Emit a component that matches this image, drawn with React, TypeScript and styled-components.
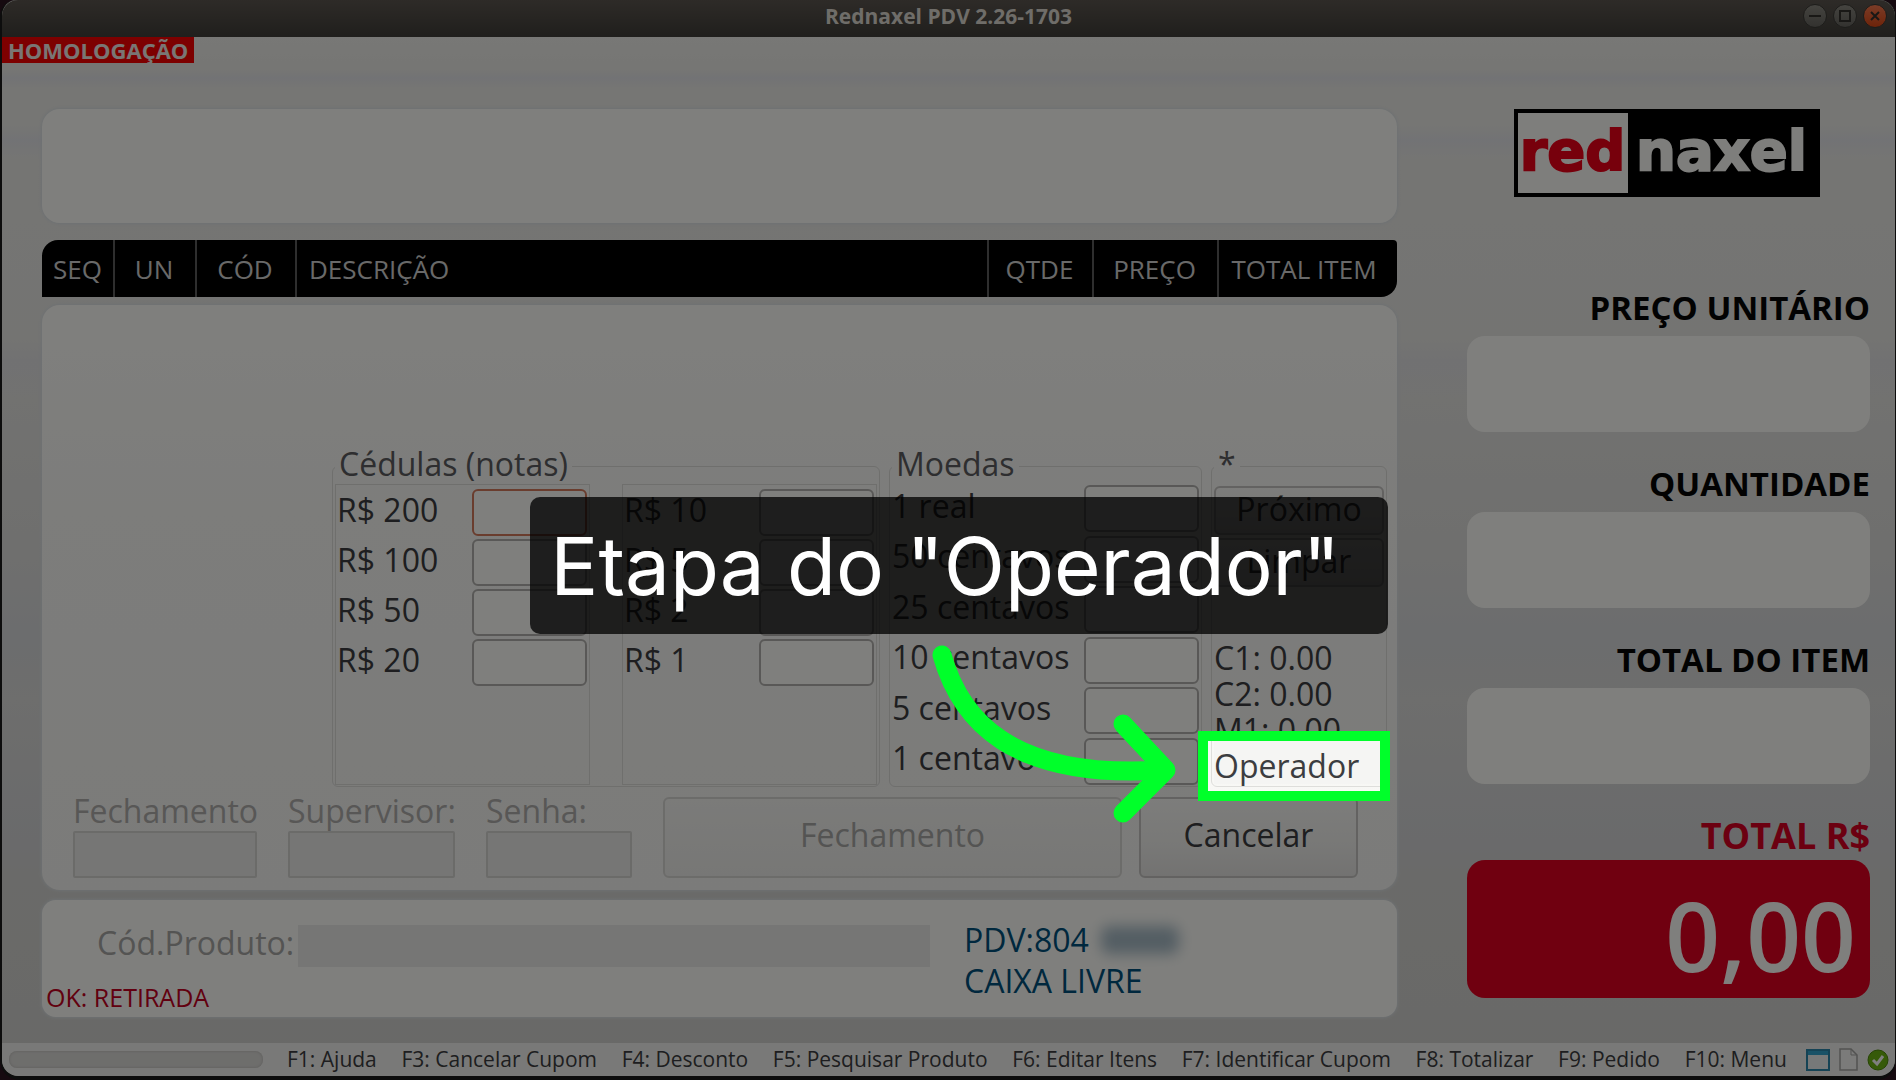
import React from "react";
import styled, { createGlobalStyle } from "styled-components";

const GlobalStyle = createGlobalStyle`
  * { box-sizing: border-box; }
  body { margin: 0; background: #2c1420; font-family: "Open Sans", "Noto Sans", sans-serif; color: #3c3d40; }
  button, input, output { font: inherit; color: inherit; }
`;

const Window = styled.div`
  display: flex;
  flex-direction: column;
  min-height: 100vh;
  border: solid #1a1a1a;
  border-width: 0 1px 4px 2px;
  border-radius: 16px 16px 20px 20px;
  background: linear-gradient(180deg, #f0f0ec 37px, #ecece8 70px, #e5e6ea 78px, #ecece8 88px, #ecece8 126px,
    #e5e6ea 140px, #ebebe7 160px, #e8e8e5 340px, #e3e3e5 360px, #e4e4e1 400px, #dededc 560px, #d8dadc 640px,
    #dcdcda 700px, #d4d5d7 840px, #d5d5d2 880px, #d2d2cf 100%);
`;

const TitleBar = styled.header`
  display: grid;
  grid-template-columns: 1fr auto 1fr;
  align-items: center;
  height: 37px;
  padding: 0 8px 6px;
  border-radius: 16px 16px 0 0;
  background: linear-gradient(180deg, #5c5650, #403e39);
`;

const Title = styled.h1`
  grid-column: 2;
  margin: 0;
  font-size: 21px;
  line-height: 28px;
  font-weight: 700;
  color: #dfdbd2;
`;

const WindowButtons = styled.div`
  display: flex;
  justify-content: flex-end;
  gap: 6px;
`;

const WindowButton = styled.button<{ $close?: boolean }>`
  display: grid;
  place-items: center;
  width: 24px;
  height: 24px;
  padding: 0;
  border: 1px solid #3a3935;
  border-radius: 50%;
  background: ${(p) => (p.$close ? "linear-gradient(#f5784f, #dd4814)" : "linear-gradient(#8a8880, #66645f)")};
  color: #33302c;
`;

const Badge = styled.strong`
  align-self: flex-start;
  padding: 0 6px;
  background: #fb0000;
  color: #f3ece8;
  font-size: 22px;
  line-height: 26px;
`;

const Workspace = styled.main`
  flex: 1;
  display: grid;
  grid-template-columns: minmax(0, 1fr) 403px;
  gap: 70px;
  padding: 46px 25px 26px 40px;
`;

const Sale = styled.div`
  display: flex;
  flex-direction: column;
`;

const Card = styled.section`
  border-radius: 18px;
  background: #fffffb;
  box-shadow: 0 0 3px 1px #dce2e6;
`;

const Display = styled(Card)`
  height: 114px;
  margin-bottom: 17px;
`;

const Items = styled.table`
  width: 100%;
  height: 57px;
  margin-bottom: 8px;
  table-layout: fixed;
  border-collapse: separate;
  border-spacing: 0;
  border-radius: 16px 4px 16px 0;
  background: #000;
`;

const Column = styled.th<{ $width?: number }>`
  width: ${(p) => (p.$width ? `${p.$width}px` : "auto")};
  padding: ${(p) => (p.$width ? "0 2px 0 0" : "0 12px")};
  text-align: ${(p) => (p.$width ? "center" : "left")};
  border-left: 2px solid #5c5c5c;
  color: #d2d2d2;
  font-size: 26px;
  line-height: 32px;
  font-weight: 400;
  &:first-child { border-left: 0; padding: 0; }
  &:last-child { padding-right: 8px; }
`;

const Closing = styled(Card)`
  flex: 1;
  display: flex;
  flex-direction: column;
  justify-content: flex-end;
  gap: 10px;
  padding: 0 10px 12px 31px;
  margin-bottom: 10px;
  background: linear-gradient(#fffffb, #fafaf7 35%, #f7f7f4);
  font-size: 32px;
  line-height: 36px;
`;

const Groups = styled.div`
  display: flex;
  justify-content: flex-end;
  gap: 9px;
`;

const Group = styled.fieldset<{ $width: number }>`
  display: flex;
  width: ${(p) => p.$width}px;
  min-width: 0;
  margin: 0;
  padding: 0 2px 1px;
  border: 1px solid #dededb;
  border-radius: 6px;
`;

const Legend = styled.legend`
  padding: 0 4px 4px;
  line-height: 32px;
  color: #5c5d60;
`;

const Notes = styled.div`
  flex: 1;
  display: flex;
  justify-content: space-between;
  height: 301px;
`;

const NotesColumn = styled.div`
  display: flex;
  flex-direction: column;
  gap: 3px;
  width: 255px;
  padding: 4px 2px 4px 1px;
  border: 1px solid #dededb;
`;

const Coins = styled.div`
  flex: 1;
  display: flex;
  flex-direction: column;
  justify-content: space-between;
  padding-top: 1px;
`;

const Row = styled.div`
  display: flex;
  justify-content: space-between;
  align-items: center;
`;

const RowLabel = styled.label`
  padding-bottom: 6px;
  white-space: nowrap;
`;

const Amount = styled.input`
  width: 115px;
  height: 47px;
  border: 2px solid #b2b1ae;
  border-radius: 6px;
  background: #fffffb;
  &[data-current="true"] { border-color: #d47a5c; }
`;

const Summary = styled.div`
  flex: 1;
  display: flex;
  flex-direction: column;
  gap: 3px;
  padding: 2px 0 1px;
`;

const Button = styled.button<{ $tall?: boolean }>`
  height: ${(p) => (p.$tall ? 81 : 49)}px;
  padding: 0 0 ${(p) => (p.$tall ? 6 : 4)}px;
  border: 2px solid #c6c5c2;
  border-radius: 6px;
  background: linear-gradient(#fafaf7, #f1f1ee 60%, #e6e5e3);
  &:disabled { color: #a9a8a6; border-color: #d9d8d5; background: linear-gradient(#f6f6f3, #efefec); }
`;

const Totals = styled.ul`
  margin: auto 0 0;
  padding: 0;
  list-style: none;
  line-height: 36px;
`;

const Operator = styled.li`
  position: relative;
  margin-top: -7px;
  padding-top: 7px;
  background: #f5f5f3;
`;

const Spotlight = styled.div`
  position: absolute;
  z-index: 10;
  inset: -10px -6px -17px -16px;
  border: 10px solid #00ff2a;
  box-shadow: 0 0 0 4000px rgba(0, 0, 0, 0.5);
`;

const Tip = styled.div`
  position: absolute;
  z-index: 11;
  right: -4px;
  bottom: 150px;
  padding: 0 48px 0 20px;
  border-radius: 10px;
  background: rgba(0, 0, 0, 0.76);
  color: #fff;
  font-family: Inter, "Liberation Sans", sans-serif;
  font-size: 80px;
  line-height: 137px;
  white-space: nowrap;
`;

const Arrow = styled.svg`
  position: absolute;
  z-index: 12;
  right: 207px;
  bottom: -39px;
`;

const Access = styled.div`
  display: grid;
  grid-template-columns: 184px 167px 146px minmax(0, 1fr) 219px;
  column-gap: 31px;
  padding-right: 29px;
`;

const AccessField = styled.label`
  display: flex;
  flex-direction: column;
  justify-content: space-between;
  line-height: 28px;
  white-space: nowrap;
  color: #b0afad;
`;

const AccessInput = styled.input`
  width: 100%;
  height: 47px;
  border: 2px solid #d6d6d3;
  border-radius: 2px;
  background: #ededea;
`;

const CloseActions = styled.div`
  grid-column: 4 / 6;
  display: grid;
  grid-template-columns: minmax(0, 1fr) 219px;
  gap: 17px;
`;

const Entry = styled(Card)`
  display: grid;
  grid-template-columns: minmax(0, 1fr) 433px;
  height: 117px;
  border-radius: 14px;
`;

const EntryLeft = styled.div`
  display: flex;
  flex-direction: column;
  justify-content: space-between;
  padding: 25px 34px 2px 4px;
`;

const Product = styled.label`
  display: flex;
  gap: 4px;
  padding-left: 51px;
  font-size: 32px;
  line-height: 36px;
  color: #a9a8a6;
`;

const ProductInput = styled.input`
  flex: 1;
  min-width: 0;
  height: 42px;
  border: 0;
  background: #ededea;
`;

const Message = styled.output`
  font-size: 25px;
  line-height: 36px;
  color: #c40020;
`;

const Station = styled.div`
  padding-top: 19px;
  font-size: 32px;
  line-height: 41px;
  color: #00507c;
`;

const StationLine = styled.div`
  display: flex;
  align-items: center;
  gap: 12px;
`;

const Redacted = styled.span`
  width: 78px;
  height: 28px;
  border-radius: 8px;
  background: #a8bcc7;
  filter: blur(7px);
`;

const Side = styled.aside`
  display: flex;
  flex-direction: column;
  gap: 32px;
`;

const Logo = styled.div`
  align-self: center;
  display: flex;
  width: 306px;
  height: 88px;
  margin: 0 4px 59px 0;
  border: 4px solid #000;
  background: #000;
  color: #fdfdf9;
  font-family: "DejaVu Sans", sans-serif;
  font-size: 56px;
  line-height: 76px;
  font-weight: 700;
  -webkit-text-stroke: 2px currentColor;
`;

const LogoRed = styled.span`
  display: flex;
  justify-content: center;
  width: 110px;
  background: #fdfdf9;
  color: #ef0018;
`;

const LogoRest = styled.span`
  flex: 1;
  text-align: center;
`;

const SideField = styled.label<{ $total?: boolean }>`
  display: flex;
  flex-direction: column;
  gap: ${(p) => (p.$total ? 4 : 8)}px;
  text-align: right;
  font-size: ${(p) => (p.$total ? 36 : 33)}px;
  line-height: 40px;
  font-weight: 700;
  color: ${(p) => (p.$total ? "#d80022" : "#050505")};
`;

const SideInput = styled.input<{ $total?: boolean }>`
  width: 100%;
  height: ${(p) => (p.$total ? 138 : 96)}px;
  padding: ${(p) => (p.$total ? "10px 14px 0" : "0 16px")};
  border: 0;
  border-radius: 18px;
  background: ${(p) => (p.$total ? "#e00020" : "#fffffb")};
  color: ${(p) => (p.$total ? "#fffffb" : "#222")};
  font-size: ${(p) => (p.$total ? 96 : 48)}px;
  font-weight: 600;
  text-align: right;
`;

const StatusBar = styled.footer`
  display: flex;
  align-items: center;
  height: 33px;
  padding: 0 6px 0 7px;
  border-radius: 0 0 16px 16px;
  background: #f3f3f0;
  font-size: 21px;
  line-height: 28px;
  white-space: nowrap;
`;

const Progress = styled.div`
  width: 254px;
  height: 17px;
  border-radius: 8px;
  background: #dddcd9;
  box-shadow: inset 0 0 3px #b8b7b4;
`;

const Shortcuts = styled.nav`
  flex: 1;
  display: flex;
  justify-content: space-between;
  padding: 0 19px 2px 24px;
`;

const StatusIcons = styled.div`
  display: flex;
  align-items: center;
  gap: 9px;
`;

const leftNotes = ["200", "100", "50", "20"];
const rightNotes = ["10", "5", "2", "1"];
const coins = ["1 real", "50 centavos", "25 centavos", "10 centavos", "5 centavos", "1 centavo"];
const shortcuts = [
  "F1: Ajuda",
  "F3: Cancelar Cupom",
  "F4: Desconto",
  "F5: Pesquisar Produto",
  "F6: Editar Itens",
  "F7: Identificar Cupom",
  "F8: Totalizar",
  "F9: Pedido",
  "F10: Menu",
];

function AmountRow({ id, label, current }: { id: string; label: string; current?: boolean }) {
  return (
    <Row>
      <RowLabel htmlFor={id}>{label}</RowLabel>
      <Amount id={id} data-current={current} />
    </Row>
  );
}

function OperatorStep() {
  return (
    <Operator>
      Operador
      <Spotlight />
      <Tip role="tooltip">Etapa do "Operador"</Tip>
      <Arrow width="250" height="190" viewBox="0 0 250 190" fill="none" stroke="#00ff2a" strokeWidth="19"
        strokeLinecap="round" strokeLinejoin="round" aria-hidden="true">
        <path d="M15 22C33 86 83 147 236 137" />
        <path d="M196 91L239 137L196 180" />
      </Arrow>
    </Operator>
  );
}

export default function App() {
  return (
    <>
      <GlobalStyle />
      <Window>
        <TitleBar>
          <Title>Rednaxel PDV 2.26-1703</Title>
          <WindowButtons>
            <WindowButton aria-label="Minimizar">
              <svg width="12" height="12" stroke="currentColor" strokeWidth="2"><path d="M0 6H12" /></svg>
            </WindowButton>
            <WindowButton aria-label="Maximizar">
              <svg width="12" height="12" fill="none" stroke="currentColor" strokeWidth="2"><path d="M1 1H11V11H1Z" /></svg>
            </WindowButton>
            <WindowButton $close aria-label="Fechar">
              <svg width="10" height="10" stroke="currentColor" strokeWidth="2"><path d="M1 1L9 9M9 1L1 9" /></svg>
            </WindowButton>
          </WindowButtons>
        </TitleBar>
        <Badge>HOMOLOGAÇÃO</Badge>
        <Workspace>
          <Sale>
            <Display />
            <Items>
              <thead>
                <tr>
                  <Column $width={71}>SEQ</Column>
                  <Column $width={82}>UN</Column>
                  <Column $width={100}>CÓD</Column>
                  <Column>DESCRIÇÃO</Column>
                  <Column $width={105}>QTDE</Column>
                  <Column $width={125}>PREÇO</Column>
                  <Column $width={180}>TOTAL ITEM</Column>
                </tr>
              </thead>
            </Items>
            <Closing>
              <Groups>
                <Group $width={548}>
                  <Legend>Cédulas (notas)</Legend>
                  <Notes>
                    <NotesColumn>
                      {leftNotes.map((n, i) => (
                        <AmountRow key={n} id={`n${n}`} label={`R$ ${n}`} current={i === 0} />
                      ))}
                    </NotesColumn>
                    <NotesColumn>
                      {rightNotes.map((n) => (
                        <AmountRow key={n} id={`n${n}`} label={`R$ ${n}`} />
                      ))}
                    </NotesColumn>
                  </Notes>
                </Group>
                <Group $width={313}>
                  <Legend>Moedas</Legend>
                  <Coins>
                    {coins.map((c, i) => (
                      <AmountRow key={c} id={`c${i}`} label={c} />
                    ))}
                  </Coins>
                </Group>
                <Group $width={176}>
                  <Legend>*</Legend>
                  <Summary>
                    <Button>Próximo</Button>
                    <Button>Limpar</Button>
                    <Totals>
                      <li>C1: 0.00</li>
                      <li>C2: 0.00</li>
                      <li>M1: 0.00</li>
                      <OperatorStep />
                    </Totals>
                  </Summary>
                </Group>
              </Groups>
              <Access>
                <AccessField>Fechamento<AccessInput disabled /></AccessField>
                <AccessField>Supervisor:<AccessInput disabled /></AccessField>
                <AccessField>Senha:<AccessInput disabled type="password" /></AccessField>
                <CloseActions>
                  <Button $tall disabled>Fechamento</Button>
                  <Button $tall>Cancelar</Button>
                </CloseActions>
              </Access>
            </Closing>
            <Entry>
              <EntryLeft>
                <Product>Cód.Produto:<ProductInput disabled /></Product>
                <Message>OK: RETIRADA</Message>
              </EntryLeft>
              <Station>
                <StationLine>PDV:804<Redacted /></StationLine>
                <StationLine>CAIXA LIVRE</StationLine>
              </Station>
            </Entry>
          </Sale>
          <Side>
            <Logo><LogoRed>red</LogoRed><LogoRest>naxel</LogoRest></Logo>
            <SideField>PREÇO UNITÁRIO<SideInput readOnly /></SideField>
            <SideField>QUANTIDADE<SideInput readOnly /></SideField>
            <SideField>TOTAL DO ITEM<SideInput readOnly /></SideField>
            <SideField $total>TOTAL R$<SideInput $total readOnly value="0,00" /></SideField>
          </Side>
        </Workspace>
        <StatusBar>
          <Progress />
          <Shortcuts>{shortcuts.map((s) => <span key={s}>{s}</span>)}</Shortcuts>
          <StatusIcons>
            <svg width="24" height="22" viewBox="0 0 24 22"><path d="M1 1H23V21H1Z" fill="#eef3f3" stroke="#2b87aa" strokeWidth="2" /><path d="M2 2H22V6H2Z" fill="#33a5cf" /></svg>
            <svg width="19" height="23" viewBox="0 0 19 23"><path d="M1 1H12L18 7V22H1Z" fill="#f6f6f4" stroke="#a5a5a3" strokeWidth="1.5" /><path d="M12 1V7H18" fill="none" stroke="#a5a5a3" /></svg>
            <svg width="22" height="22" viewBox="0 0 22 22"><circle cx="11" cy="11" r="10" fill="#6cb512" stroke="#4d8a08" /><path d="M6 11L10 15L16 7" fill="none" stroke="#fff" strokeWidth="3" /></svg>
          </StatusIcons>
        </StatusBar>
      </Window>
    </>
  );
}
